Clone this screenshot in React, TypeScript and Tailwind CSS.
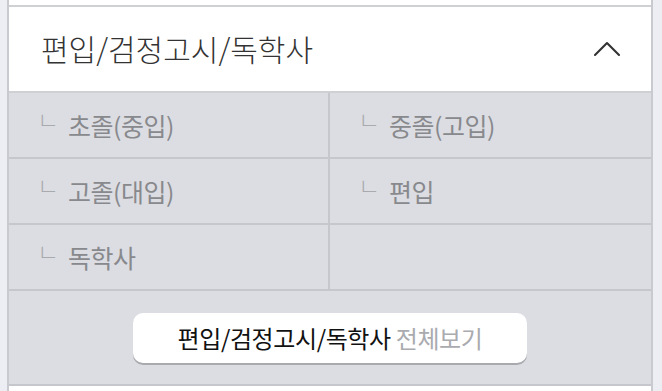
import { ChevronUp } from "lucide-react"

const items = ["초졸(중입)", "중졸(고입)", "고졸(대입)", "편입", "독학사", ""]

function Cell({ label, right }: { label: string; right: boolean }) {
  return (
    <div
      className={`flex h-[64px] items-center pl-[28px] ${right ? "" : "border-r-2 border-[#c6c7cc]"}`}
    >
      {label && (
        <>
          <span className="mr-[9px] -translate-y-[6px] text-[24px] font-light leading-none text-[#a9aaae]">ㄴ</span>
          <span className="text-[25px] leading-none tracking-[-0.5px] text-[#88898d]">{label}</span>
        </>
      )}
    </div>
  )
}

export default function App() {
  return (
    <div
      className="flex h-[391px] w-[662px] overflow-hidden bg-white"
      style={{ fontFamily: '"Noto Sans CJK KR", "Noto Sans", sans-serif' }}
    >
      <div className="w-[7px] shrink-0 bg-[#eceef3]" />
      <div className="flex w-[646px] shrink-0 flex-col border-x-2 border-[#c9cacf] bg-white">
        <div className="h-[7px] shrink-0 border-b-2 border-[#cfd0d4]" />
        <div className="flex h-[86px] shrink-0 items-center justify-between border-b-2 border-[#cfd0d4] pl-[32px] pr-[20px]">
          <span className="-translate-y-[1px] text-[30px] font-light tracking-[0px] text-[#333]">편입/검정고시/독학사</span>
          <ChevronUp className="h-[48px] w-[48px] text-[#333]" strokeWidth={1.05} />
        </div>
        <div className="grid shrink-0 grid-cols-2 bg-[#dcdde2]">
          {items.map((label, i) => (
            <div key={i} className="border-b-2 border-[#c6c7cc]">
              <Cell label={label} right={i % 2 === 1} />
            </div>
          ))}
        </div>
        <div className="flex h-[95px] shrink-0 items-center justify-center border-b-2 border-[#c6c7cc] bg-[#dcdde2]">
          <div className="flex h-[50px] w-[394px] items-center justify-center rounded-[10px] bg-white text-[24px] tracking-[-0.4px] shadow-[0_2px_0_#a9aaae]">
            <span className="text-[#111]">편입/검정고시/독학사</span>
            <span className="ml-[5px] text-[#aaabaf]">전체보기</span>
          </div>
        </div>
      </div>
      <div className="flex-1 bg-[#eceef3]" />
    </div>
  )
}
